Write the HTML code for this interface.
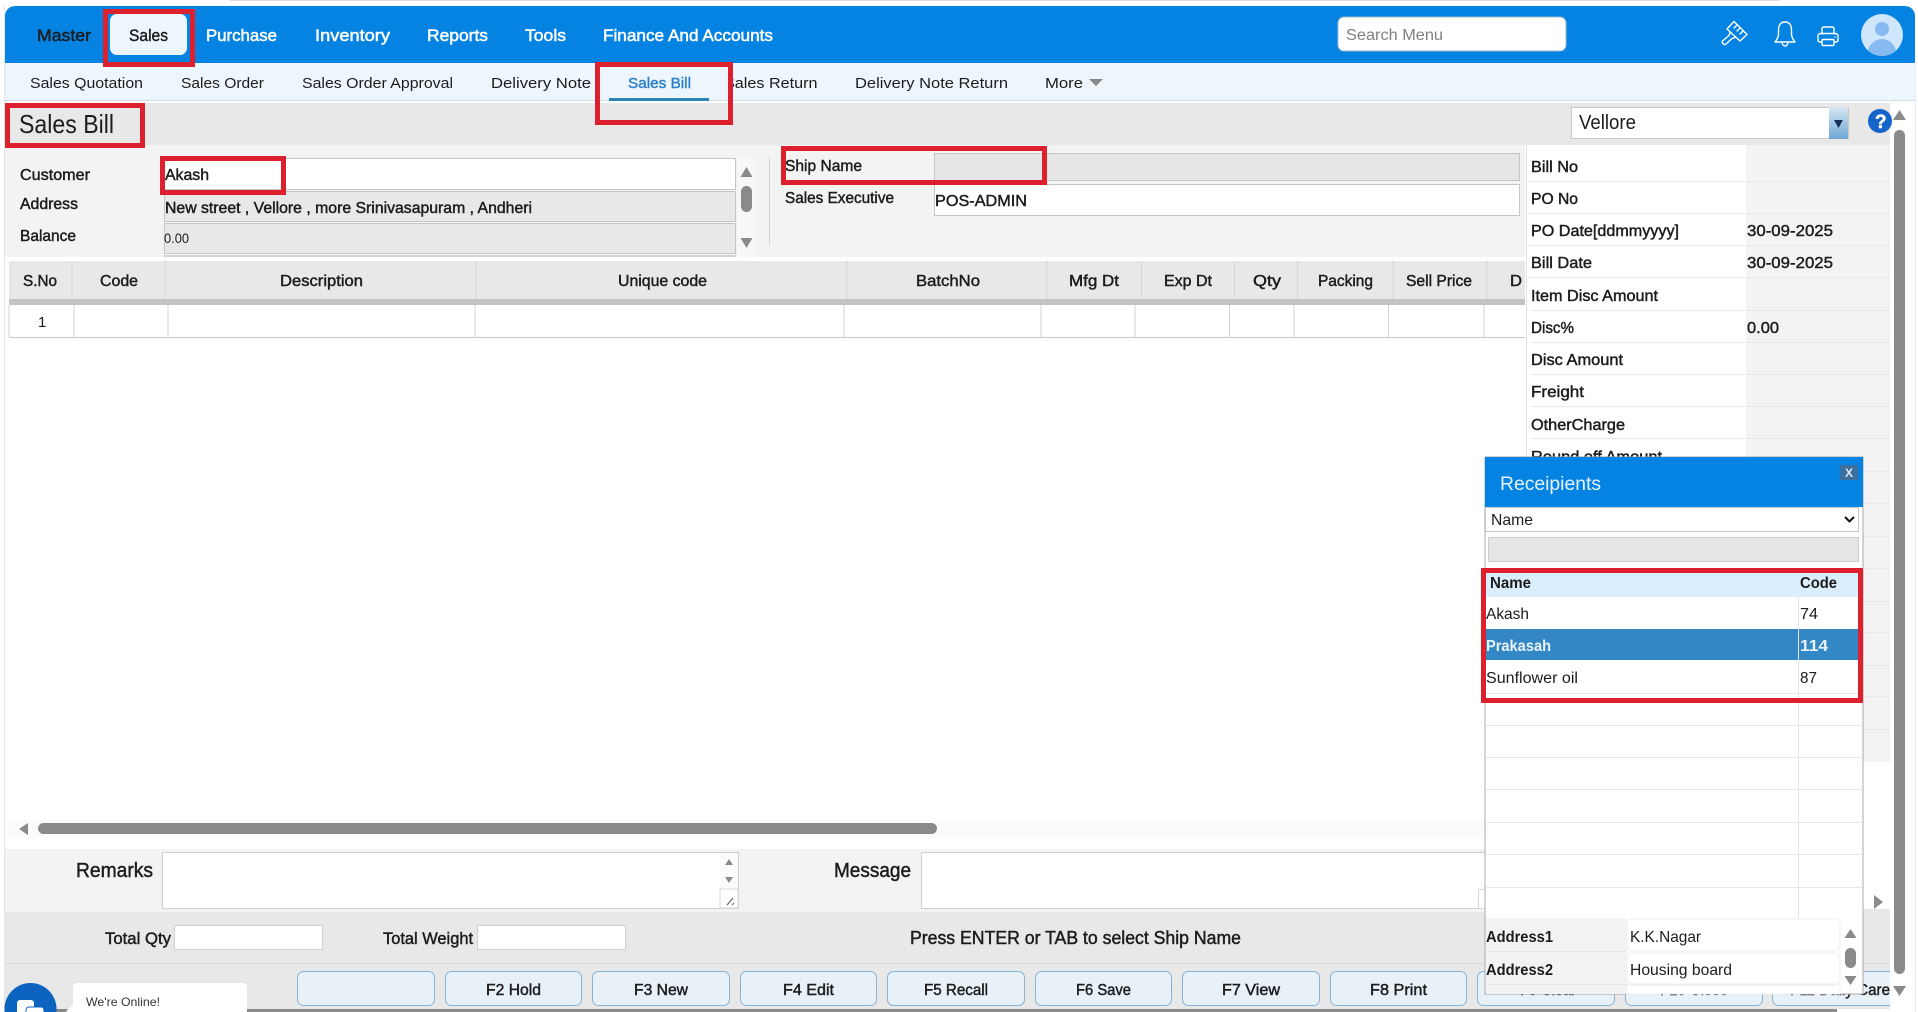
<!DOCTYPE html>
<html lang="en"><head><meta charset="utf-8"><title>Sales Bill</title>
<style>
html,body{margin:0;padding:0;background:#fff;width:1918px;height:1012px;overflow:hidden}
svg{display:block}
text{font-family:"Liberation Sans",sans-serif;fill:#1c1c1c}
.b{stroke:#1c1c1c;stroke-width:.45px}
.w{fill:#fff;stroke:#fff;stroke-width:.5px}
</style></head><body>
<svg width="1918" height="1012" viewBox="0 0 1918 1012" xmlns="http://www.w3.org/2000/svg">
<rect width="1918" height="1012" fill="#fff"/>
<rect x="230" y="0" width="1550" height="1" fill="#ddd"/>
<rect x="4" y="6" width="1" height="1006" fill="#e6e6e6"/>

<!-- top nav -->
<path d="M5 63V16a10 10 0 0 1 10-10H1905a10 10 0 0 1 10 10V63z" fill="#0583e3"/>
<rect x="110" y="14" width="77" height="41" rx="7" fill="#eef6fd"/>
<text x="37" y="41" font-size="17" textLength="54" lengthAdjust="spacingAndGlyphs" class="b">Master</text>
<text x="129" y="41" font-size="17" textLength="39" lengthAdjust="spacingAndGlyphs" class="b">Sales</text>
<text x="206" y="41" font-size="17" textLength="71" lengthAdjust="spacingAndGlyphs" class="w">Purchase</text>
<text x="315" y="41" font-size="17" textLength="75" lengthAdjust="spacingAndGlyphs" class="w">Inventory</text>
<text x="427" y="41" font-size="17" textLength="61" lengthAdjust="spacingAndGlyphs" class="w">Reports</text>
<text x="525" y="41" font-size="17" textLength="41" lengthAdjust="spacingAndGlyphs" class="w">Tools</text>
<text x="603" y="41" font-size="17" textLength="170" lengthAdjust="spacingAndGlyphs" class="w">Finance And Accounts</text>

<rect x="1338" y="17" width="228" height="34" rx="6" fill="#fff" stroke="#9db8cc"/>
<text x="1346" y="40" font-size="16" textLength="97" lengthAdjust="spacingAndGlyphs" style="fill:#808080">Search Menu</text>

<!-- brush icon -->
<g fill="none" stroke="#fff" stroke-width="1.4" stroke-linejoin="round" stroke-linecap="round">
<path d="M1734 21.500L1747 34.500 1740 41 1727 29z"/>
<path d="M1730 32.500l-1 3-6 5c-2 2 .5 5 3 3.500l6-5.500 3-1"/>
<path d="M1737 25l-3 3M1740 28l-3 3M1743 31l-3 3"/>
<!-- bell -->
<path d="M1785 22c-4.500 0-6.500 3.500-6.500 8v4c0 3-1.500 5.500-3.500 8h20c-2-2.500-3.500-5-3.500-8v-4c0-4.500-2-8-6.500-8z"/>
<path d="M1782 42.500c.5 2.500 1.500 3.500 3 3.500s2.500-1 3-3.500"/>
<!-- printer -->
<path d="M1822 34v-5.500c0-.8.700-1.500 1.500-1.500h9c.8 0 1.500.7 1.500 1.500V34"/>
<path d="M1822 42h-2c-1.200 0-2-.8-2-2v-4c0-1.500 1-2.500 2.500-2.500h15c1.500 0 2.500 1 2.500 2.500v4c0 1.200-.8 2-2 2h-2"/>
<rect x="1822" y="39.500" width="12" height="6" rx="1"/>
<path d="M1834.500 37h1" stroke-width="1"/>
</g>
<!-- avatar -->
<clipPath id="av"><circle cx="1882" cy="35" r="21"/></clipPath>
<circle cx="1882" cy="35" r="21" fill="#cfe7fd"/>
<g clip-path="url(#av)" fill="#86baf0"><circle cx="1882" cy="29" r="7"/><ellipse cx="1882" cy="56" rx="15" ry="17"/></g>

<!-- sub nav -->
<rect x="5" y="63" width="1910" height="37" fill="#eef6fd"/>
<rect x="5" y="100" width="1910" height="1" fill="#cfdde8"/>
<g font-size="15">
<text x="30" y="88" textLength="113" lengthAdjust="spacingAndGlyphs">Sales Quotation</text>
<text x="181" y="88" textLength="83" lengthAdjust="spacingAndGlyphs">Sales Order</text>
<text x="302" y="88" textLength="151" lengthAdjust="spacingAndGlyphs">Sales Order Approval</text>
<text x="491" y="88" textLength="100" lengthAdjust="spacingAndGlyphs">Delivery Note</text>
<text x="628" y="88" textLength="63" lengthAdjust="spacingAndGlyphs" style="fill:#2a80c8;stroke:#2a80c8;stroke-width:.4px">Sales Bill</text>
<text x="724" y="88" textLength="93.500" lengthAdjust="spacingAndGlyphs">Sales Return</text>
<text x="855" y="88" textLength="153" lengthAdjust="spacingAndGlyphs">Delivery Note Return</text>
<text x="1045" y="88" textLength="38" lengthAdjust="spacingAndGlyphs">More</text>
</g>
<rect x="716" y="66" width="13" height="32" fill="#eef6fd"/>
<path d="M1089 79h14l-7 7z" fill="#8a8a8a"/>
<rect x="609" y="98" width="100" height="3" fill="#2c83b8"/>

<!-- heading bar -->
<rect x="5" y="103" width="1885" height="42" fill="#e8e8e8"/>
<text x="19" y="133" font-size="26" textLength="95" lengthAdjust="spacingAndGlyphs">Sales Bill</text>
<rect x="1571.500" y="107.500" width="277" height="31" fill="#fff" stroke="#c8c8c8"/>
<text x="1579" y="129" font-size="20" textLength="57" lengthAdjust="spacingAndGlyphs">Vellore</text>
<linearGradient id="dd" x1="0" y1="0" x2="0" y2="1"><stop offset="0" stop-color="#d8e6f2"/><stop offset="1" stop-color="#6ea8d4"/></linearGradient>
<rect x="1829" y="107" width="19" height="32" fill="url(#dd)"/>
<path d="M1834 120h9l-4.500 8z" fill="#15315a"/>
<circle cx="1880" cy="121" r="12" fill="#1565c8"/>
<text x="1875" y="128" font-size="19" font-weight="700" class="w">?</text>

<!-- form section -->
<rect x="5" y="145" width="1520" height="112" fill="#f3f3f3"/>
<g font-size="16">
<text x="20" y="180" textLength="70" lengthAdjust="spacingAndGlyphs" class="b">Customer</text>
<text x="20" y="209" textLength="58" lengthAdjust="spacingAndGlyphs" class="b">Address</text>
<text x="20" y="241" textLength="56" lengthAdjust="spacingAndGlyphs" class="b">Balance</text>
</g>
<rect x="164.500" y="158.500" width="571" height="31" fill="#fff" stroke="#c6c6c6"/>
<rect x="164.500" y="191.500" width="571" height="30" fill="#e8e8e8" stroke="#c6c6c6"/>
<rect x="164.500" y="223.500" width="571" height="30" fill="#e8e8e8" stroke="#c6c6c6"/>
<rect x="164" y="255" width="572" height="2" fill="#d4d4d4"/>
<text x="165" y="180" font-size="16" textLength="44" lengthAdjust="spacingAndGlyphs" class="b">Akash</text>
<text x="165" y="213" font-size="16" textLength="367" lengthAdjust="spacingAndGlyphs" class="b">New street , Vellore , more Srinivasapuram , Andheri</text>
<text x="164" y="243" font-size="14" textLength="25" lengthAdjust="spacingAndGlyphs">0.00</text>
<rect x="738" y="157" width="17" height="100" fill="#f7f7f7"/>
<path d="M746.500 167l6 10h-12z" fill="#8a8a8a"/><path d="M740.500 238h12l-6 10z" fill="#8a8a8a"/>
<rect x="741" y="186" width="11" height="26" rx="5.500" fill="#8a8a8a"/>
<rect x="769" y="157" width="1" height="88" fill="#d0d0d0"/>

<rect x="934.500" y="153.500" width="585" height="27" fill="#e6e6e6" stroke="#c6c6c6"/>
<rect x="934.500" y="184.500" width="585" height="31" fill="#fff" stroke="#c6c6c6"/>
<g font-size="16">
<text x="785" y="171" textLength="77" lengthAdjust="spacingAndGlyphs" class="b">Ship Name</text>
<text x="785" y="203" textLength="109" lengthAdjust="spacingAndGlyphs" class="b">Sales Executive</text>
<text x="935" y="206" textLength="92" lengthAdjust="spacingAndGlyphs" class="b">POS-ADMIN</text>
</g>

<!-- table -->
<rect x="9" y="261" width="1516" height="38" fill="#e8e8e8"/>
<rect x="9" y="299" width="1516" height="6" fill="#c4c4c4"/>
<rect x="9" y="305" width="1516" height="32" fill="#fff"/>
<rect x="9" y="337" width="1516" height="1" fill="#c8c8c8"/>
<path d="M72 261v38M165 261v38M476 261v38M847 261v38M1047 261v38M1141.500 261v38M1234.500 261v38M1297.500 261v38M1393 261v38M1487 261v38" stroke="#d6d6d6"/>
<path d="M9 305v32M74 305v32M168 305v32M475 305v32M844 305v32M1041 305v32M1135 305v32M1229.500 305v32M1294 305v32M1388.500 305v32M1484 305v32" stroke="#d2d2d2"/>
<g font-size="16">
<text x="23" y="286" textLength="34" lengthAdjust="spacingAndGlyphs" class="b">S.No</text>
<text x="100" y="286" textLength="38" lengthAdjust="spacingAndGlyphs" class="b">Code</text>
<text x="280" y="286" textLength="83" lengthAdjust="spacingAndGlyphs" class="b">Description</text>
<text x="618" y="286" textLength="89" lengthAdjust="spacingAndGlyphs" class="b">Unique code</text>
<text x="916" y="286" textLength="64" lengthAdjust="spacingAndGlyphs" class="b">BatchNo</text>
<text x="1069" y="286" textLength="50" lengthAdjust="spacingAndGlyphs" class="b">Mfg Dt</text>
<text x="1164" y="286" textLength="48" lengthAdjust="spacingAndGlyphs" class="b">Exp Dt</text>
<text x="1253" y="286" textLength="28" lengthAdjust="spacingAndGlyphs" class="b">Qty</text>
<text x="1318" y="286" textLength="55" lengthAdjust="spacingAndGlyphs" class="b">Packing</text>
<text x="1406" y="286" textLength="66" lengthAdjust="spacingAndGlyphs" class="b">Sell Price</text>
<text x="1510" y="286" textLength="12" lengthAdjust="spacingAndGlyphs" class="b">D</text>
<text x="38" y="327" font-size="15">1</text>
</g>

<!-- right panel -->
<rect x="1526" y="145" width="1" height="620" fill="#e2e2e2"/>
<rect x="1746" y="145" width="144" height="617" fill="#f3f3f3"/>
<rect x="1530" y="150" width="216" height="612" fill="#fff"/>
<path d="M1530 181.500H1890M1530 213.500H1890M1530 245.500H1890M1530 277.500H1890M1530 310.500H1890M1530 342.500H1890M1530 374.500H1890M1530 406.500H1890M1530 438.500H1890M1530 471.500H1890M1530 503.500H1890M1530 536.500H1890M1530 568.500H1890M1530 601.500H1890M1530 632.500H1890M1530 665.500H1890M1530 696.500H1890M1530 729.500H1890" stroke="#e8e8e8"/>
<g font-size="16">
<text x="1531" y="172" textLength="47" lengthAdjust="spacingAndGlyphs" class="b">Bill No</text>
<text x="1531" y="204" textLength="47" lengthAdjust="spacingAndGlyphs" class="b">PO No</text>
<text x="1531" y="236" textLength="148" lengthAdjust="spacingAndGlyphs" class="b">PO Date[ddmmyyyy]</text>
<text x="1531" y="268" textLength="61" lengthAdjust="spacingAndGlyphs" class="b">Bill Date</text>
<text x="1531" y="301" textLength="127" lengthAdjust="spacingAndGlyphs" class="b">Item Disc Amount</text>
<text x="1531" y="333" textLength="43" lengthAdjust="spacingAndGlyphs" class="b">Disc%</text>
<text x="1531" y="365" textLength="92" lengthAdjust="spacingAndGlyphs" class="b">Disc Amount</text>
<text x="1531" y="397" textLength="53" lengthAdjust="spacingAndGlyphs" class="b">Freight</text>
<text x="1531" y="430" textLength="94" lengthAdjust="spacingAndGlyphs" class="b">OtherCharge</text>
<text x="1531" y="462" textLength="131" lengthAdjust="spacingAndGlyphs" class="b">Round off Amount</text>
<text x="1747" y="236" textLength="86" lengthAdjust="spacingAndGlyphs" class="b">30-09-2025</text>
<text x="1747" y="268" textLength="86" lengthAdjust="spacingAndGlyphs" class="b">30-09-2025</text>
<text x="1747" y="333" textLength="32" lengthAdjust="spacingAndGlyphs" class="b">0.00</text>
</g>

<!-- horizontal scrollbar -->
<rect x="9" y="820" width="1476" height="18" fill="#fbfbfb"/>
<path d="M28 823v12l-9-6z" fill="#8a8a8a"/>
<rect x="38" y="823" width="899" height="11" rx="5.500" fill="#8a8a8a"/>

<!-- remarks -->
<rect x="5" y="849" width="1480" height="63" fill="#f3f3f3"/>
<text x="76" y="877" font-size="20" textLength="77" lengthAdjust="spacingAndGlyphs" class="b">Remarks</text>
<rect x="162.500" y="852.500" width="576" height="56" fill="#fff" stroke="#cfcfcf"/>
<rect x="720" y="853" width="18" height="36" fill="#fbfbfb"/>
<path d="M729 859l4 6h-8z" fill="#8a8a8a"/><path d="M725 877h8l-4 6z" fill="#8a8a8a"/>
<rect x="720" y="889" width="18" height="19" fill="#fff" stroke="#d8d8d8"/>
<path d="M727 905l6-7M732 905l2-2" stroke="#555" stroke-width="1"/>
<text x="834" y="877" font-size="20" textLength="77" lengthAdjust="spacingAndGlyphs" class="b">Message</text>
<rect x="921.500" y="852.500" width="620" height="56" fill="#fff" stroke="#cfcfcf"/>
<rect x="1478.500" y="889.500" width="10" height="19" fill="#fff" stroke="#d8d8d8"/>
<path d="M1874 895l9 7-9 7z" fill="#8a8a8a"/>

<!-- totals and buttons -->
<rect x="5" y="912" width="1885" height="97" fill="#e8e8e8"/>
<rect x="1863" y="909" width="27" height="3" fill="#e8e8e8"/>
<rect x="5" y="963" width="1885" height="1" fill="#d8d8d8"/>
<g font-size="17">
<text x="105" y="944" textLength="66" lengthAdjust="spacingAndGlyphs" class="b">Total Qty</text>
<text x="383" y="944" textLength="90" lengthAdjust="spacingAndGlyphs" class="b">Total Weight</text>
<text x="910" y="944" font-size="18" textLength="331" lengthAdjust="spacingAndGlyphs" class="b">Press ENTER or TAB to select Ship Name</text>
</g>
<rect x="174.500" y="925.500" width="148" height="24" fill="#fff" stroke="#d2d2d2"/>
<rect x="477.500" y="925.500" width="148" height="24" fill="#fff" stroke="#d2d2d2"/>
<g fill="#e8f0f8" stroke="#86b4d8">
<rect x="297.500" y="971.500" width="137" height="34" rx="6"/>
<rect x="445.500" y="971.500" width="136" height="34" rx="6"/>
<rect x="592.500" y="971.500" width="137" height="34" rx="6"/>
<rect x="740.500" y="971.500" width="136" height="34" rx="6"/>
<rect x="887.500" y="971.500" width="137" height="34" rx="6"/>
<rect x="1035.500" y="971.500" width="136" height="34" rx="6"/>
<rect x="1182.500" y="971.500" width="137" height="34" rx="6"/>
<rect x="1330.500" y="971.500" width="136" height="34" rx="6"/>
<rect x="1477.500" y="971.500" width="137" height="34" rx="6"/>
<rect x="1625.500" y="971.500" width="137" height="34" rx="6"/>
<rect x="1772.500" y="971.500" width="137" height="34" rx="6"/>
</g>
<g font-size="16">
<text x="486" y="995" textLength="55" lengthAdjust="spacingAndGlyphs" class="b">F2 Hold</text>
<text x="634" y="995" textLength="54" lengthAdjust="spacingAndGlyphs" class="b">F3 New</text>
<text x="783" y="995" textLength="51" lengthAdjust="spacingAndGlyphs" class="b">F4 Edit</text>
<text x="924" y="995" textLength="64" lengthAdjust="spacingAndGlyphs" class="b">F5 Recall</text>
<text x="1076" y="995" textLength="55" lengthAdjust="spacingAndGlyphs" class="b">F6 Save</text>
<text x="1222" y="995" textLength="58" lengthAdjust="spacingAndGlyphs" class="b">F7 View</text>
<text x="1370" y="995" textLength="57" lengthAdjust="spacingAndGlyphs" class="b">F8 Print</text>
<text x="1520" y="995" textLength="56" lengthAdjust="spacingAndGlyphs" class="b">F9 Clear</text>
<text x="1660" y="995" textLength="68" lengthAdjust="spacingAndGlyphs" class="b">F10 Close</text>
<text x="1790" y="995" textLength="100" lengthAdjust="spacingAndGlyphs" class="b">F11 Daily Care</text>
</g>
<rect x="1890" y="960" width="28" height="50" fill="#fff"/>
<rect x="37" y="1009" width="1800" height="3" fill="#8a8a8a"/>

<!-- page scrollbar -->
<path d="M1899.500 110l6.500 10h-13z" fill="#8a8a8a"/>
<rect x="1894" y="130" width="11" height="844" rx="5.500" fill="#8a8a8a"/>
<path d="M1893 986h13l-6.500 10z" fill="#8a8a8a"/>
<rect x="1915" y="63" width="1" height="949" fill="#ececec"/>

<!-- popup -->
<rect x="1485" y="457" width="378" height="537" fill="#fff" stroke="#a8a8a8"/>
<rect x="1485" y="457" width="378" height="50" fill="#0583e3"/>
<text x="1500" y="490" font-size="19" textLength="101" lengthAdjust="spacingAndGlyphs" style="fill:#e6f3ff">Receipients</text>
<rect x="1840" y="465" width="18" height="15" fill="#3b6f9e"/>
<text x="1845" y="477" font-size="12" font-weight="700" style="fill:#dfe9f2">X</text>
<rect x="1485.500" y="507.500" width="373" height="24" fill="#fff" stroke="#c8c8c8"/>
<text x="1491" y="525" font-size="16" textLength="42" lengthAdjust="spacingAndGlyphs">Name</text>
<path d="M1845 517l4.500 4.500 4.500-4.500" fill="none" stroke="#111" stroke-width="2"/>
<rect x="1488.500" y="537.500" width="370" height="24" fill="#e6e6e6" stroke="#cccccc"/>
<rect x="1486" y="573" width="372" height="24" fill="#dbeefd"/>
<rect x="1486" y="629" width="372" height="31" fill="#3487c5"/>
<path d="M1798.500 597V918" stroke="#e6e6e6"/>
<path d="M1486 693.500H1862M1486 725.500H1862M1486 757.500H1862M1486 789.500H1862M1486 822.500H1862M1486 854.500H1862M1486 887.500H1862" stroke="#e6e6e6"/>
<g font-size="16">
<text x="1490" y="588" textLength="41" lengthAdjust="spacingAndGlyphs" font-weight="700">Name</text>
<text x="1800" y="588" textLength="37" lengthAdjust="spacingAndGlyphs" font-weight="700">Code</text>
<text x="1486" y="619" textLength="43" lengthAdjust="spacingAndGlyphs">Akash</text>
<text x="1800" y="619" textLength="18" lengthAdjust="spacingAndGlyphs">74</text>
<text x="1486" y="651" textLength="65" lengthAdjust="spacingAndGlyphs" font-weight="700" style="fill:#e8f3fb">Prakasah</text>
<text x="1800" y="651" textLength="28" lengthAdjust="spacingAndGlyphs" font-weight="700" style="fill:#e8f3fb">114</text>
<text x="1486" y="683" textLength="92" lengthAdjust="spacingAndGlyphs">Sunflower oil</text>
<text x="1800" y="683" textLength="17" lengthAdjust="spacingAndGlyphs">87</text>
</g>
<rect x="1486" y="918" width="141" height="76" fill="#f3f3f3"/>
<rect x="1486" y="951" width="141" height="1" fill="#e4e4e4"/><rect x="1486" y="984" width="141" height="1" fill="#e4e4e4"/>
<rect x="1627" y="919" width="213" height="32" rx="5" fill="#fff" stroke="#eeeeee"/>
<rect x="1627" y="953" width="213" height="31" rx="5" fill="#fff" stroke="#eeeeee"/>
<rect x="1627" y="985" width="213" height="9" fill="#fff" stroke="#eeeeee"/>
<g font-size="16">
<text x="1486" y="942" textLength="67" lengthAdjust="spacingAndGlyphs" font-weight="700">Address1</text>
<text x="1486" y="975" textLength="67" lengthAdjust="spacingAndGlyphs" font-weight="700">Address2</text>
<text x="1630" y="942" textLength="71" lengthAdjust="spacingAndGlyphs">K.K.Nagar</text>
<text x="1630" y="975" textLength="102" lengthAdjust="spacingAndGlyphs">Housing board</text>
</g>
<path d="M1850.500 929l6 9h-12z" fill="#8a8a8a"/>
<rect x="1845" y="948" width="11" height="20" rx="5.500" fill="#8a8a8a"/>
<path d="M1844.500 976h12l-6 9z" fill="#8a8a8a"/>

<!-- chat widget -->
<circle cx="30.500" cy="1009" r="26" fill="#0d63c0"/>
<rect x="17" y="1000" width="17" height="14" rx="3" fill="#fff"/>
<rect x="26" y="1007" width="18" height="14" rx="3" fill="#fff" stroke="#0d63c0"/>
<path d="M73 1005l-7 6 7 4z" fill="#fff"/>
<rect x="73" y="983" width="174" height="32" rx="4" fill="#fff"/>
<text x="86" y="1006" font-size="12" textLength="74" lengthAdjust="spacingAndGlyphs" style="fill:#333">We're Online!</text>

<!-- red annotation boxes -->
<g fill="none" stroke="#dd202e" stroke-width="5">
<rect x="105.500" y="11.500" width="87" height="53"/>
<rect x="597.500" y="64.500" width="133" height="58"/>
<rect x="7.500" y="105.500" width="135" height="40"/>
<rect x="162.500" y="158.500" width="121" height="34"/>
<rect x="783.500" y="148.500" width="261" height="34"/>
<rect x="1483.500" y="570.500" width="377" height="130"/>
</g>
</svg>
</body></html>
